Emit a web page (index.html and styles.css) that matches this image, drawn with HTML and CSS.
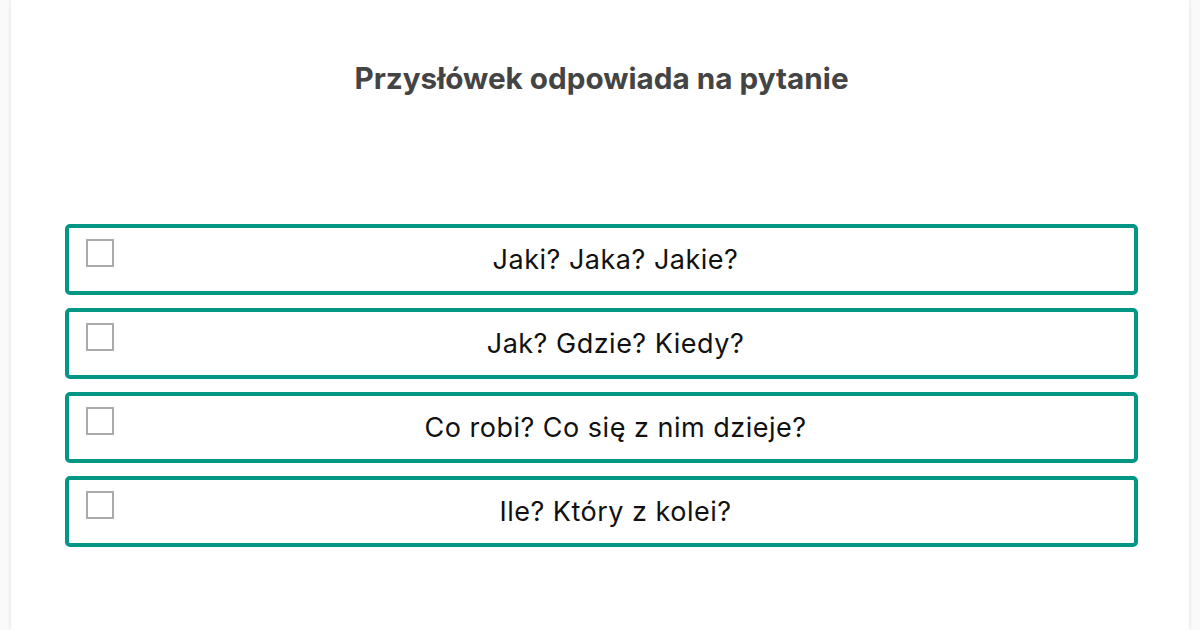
FILE: index.html
```html
<!DOCTYPE html>
<html lang="pl">
<head>
<meta charset="utf-8">
<title>Przysłówek</title>
<link rel="stylesheet" href="styles.css">
</head>
<body>
<main class="card">
  <h1 class="question">Przysłówek odpowiada na pytanie</h1>
  <ul class="answers">
    <li class="answer"><span class="check"></span><span class="label">Jaki? Jaka? Jakie?</span></li>
    <li class="answer"><span class="check"></span><span class="label">Jak? Gdzie? Kiedy?</span></li>
    <li class="answer"><span class="check"></span><span class="label">Co robi? Co się z nim dzieje?</span></li>
    <li class="answer"><span class="check"></span><span class="label">Ile? Który z kolei?</span></li>
  </ul>
</main>
</body>
</html>
```

FILE: styles.css
```css
html, body {
  margin: 0;
  height: 100%;
  background: #fafafa;
  overflow: hidden;
}

.card {
  box-sizing: border-box;
  margin: 0 11px;
  min-height: 100%;
  background: #fff;
  box-shadow: 0 0 4px rgba(0, 0, 0, 0.12);
  padding: 58px 51px 0 54px;
  font-family: Inter, "Liberation Sans", sans-serif;
}

.question {
  margin: 0;
  text-align: center;
  font-size: 29.7px;
  font-weight: 700;
  color: #444;
  line-height: 40px;
}

.answers {
  list-style: none;
  margin: 126px 0 0;
  padding: 0;
  display: flex;
  flex-direction: column;
  gap: 13px;
}

.answer {
  box-sizing: border-box;
  height: 71px;
  border: 4px solid #039685;
  border-radius: 5px;
  display: flex;
  align-items: center;
  position: relative;
}

.check {
  position: absolute;
  left: 17px;
  top: 11px;
  box-sizing: border-box;
  width: 28px;
  height: 28px;
  border: 2px solid #aaa;
  background: #fff;
}

.label {
  flex: 1;
  text-align: center;
  padding-left: 28px;
  font-family: Inter, "Liberation Sans", sans-serif;
  font-size: 27px;
  letter-spacing: 0.5px;
  color: #111;
}
```
